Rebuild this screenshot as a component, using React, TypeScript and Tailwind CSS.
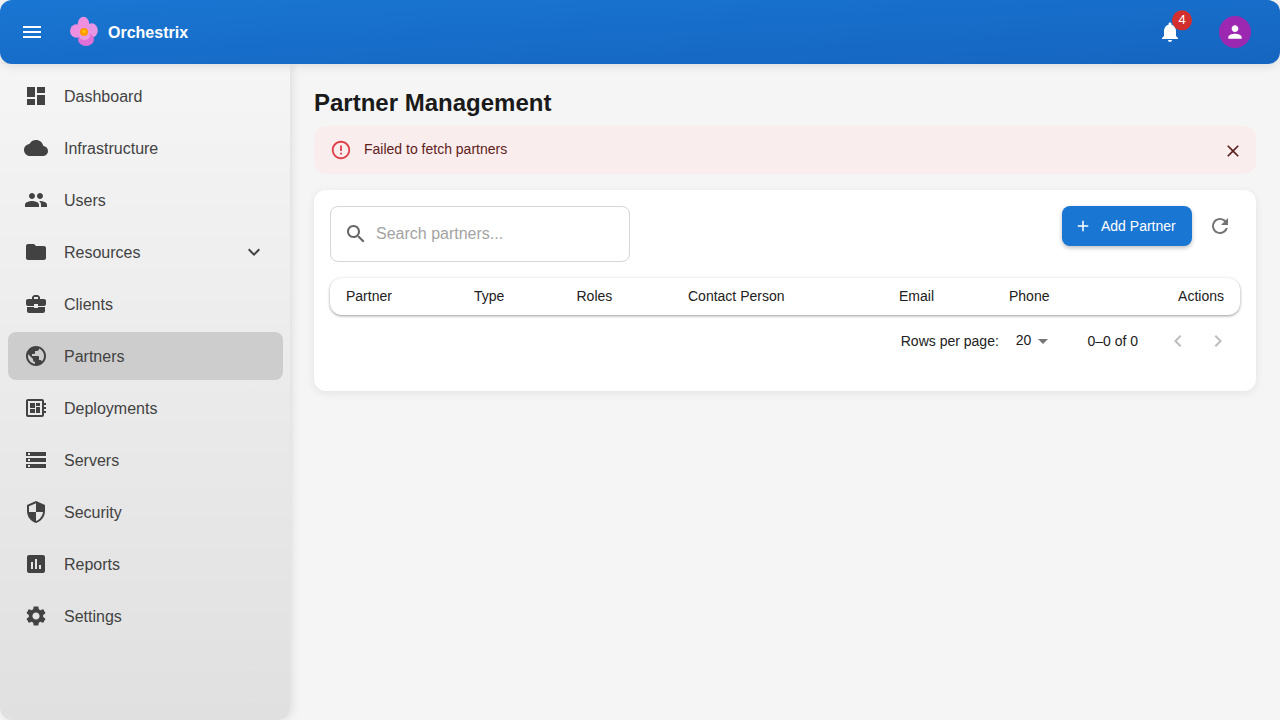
import type { ReactNode } from "react";

const icons = {
  menu: "M3 18h18v-2H3v2zm0-5h18v-2H3v2zm0-7v2h18V6H3z",
  dashboard: "M3 13h8V3H3v10zm0 8h8v-6H3v6zm10 0h8V11h-8v10zm0-18v6h8V3h-8z",
  cloud:
    "M19.35 10.04C18.67 6.59 15.64 4 12 4 9.11 4 6.6 5.64 5.35 8.04 2.34 8.36 0 10.91 0 14c0 3.31 2.69 6 6 6h13c2.76 0 5-2.24 5-5 0-2.64-2.05-4.78-4.65-4.96z",
  people:
    "M16 11c1.66 0 2.99-1.34 2.99-3S17.66 5 16 5c-1.66 0-3 1.34-3 3s1.34 3 3 3zm-8 0c1.66 0 2.99-1.34 2.99-3S9.66 5 8 5C6.34 5 5 6.34 5 8s1.34 3 3 3zm0 2c-2.33 0-7 1.17-7 3.5V19h14v-2.5c0-2.33-4.67-3.5-7-3.5zm8 0c-.29 0-.62.02-.97.05 1.16.84 1.97 1.97 1.97 3.45V19h6v-2.5c0-2.33-4.67-3.5-7-3.5z",
  folder: "M10 4H4c-1.1 0-1.99.9-1.99 2L2 18c0 1.1.9 2 2 2h16c1.1 0 2-.9 2-2V8c0-1.1-.9-2-2-2h-8l-2-2z",
  expand: "M16.59 8.59 12 13.17 7.41 8.59 6 10l6 6 6-6z",
  business:
    "M10 16v-1H3.01L3 19c0 1.11.89 2 2 2h14c1.11 0 2-.89 2-2v-4h-7v1h-4zm10-9h-4.01V5l-2-2h-4l-2 2v2H4c-1.1 0-2 .9-2 2v3c0 1.11.89 2 2 2h6v-2h4v2h6c1.1 0 2-.9 2-2V9c0-1.1-.9-2-2-2zm-6 0h-4V5h4v2z",
  public:
    "M12 2C6.48 2 2 6.48 2 12s4.48 10 10 10 10-4.48 10-10S17.52 2 12 2zm-1 17.93c-3.95-.49-7-3.85-7-7.93 0-.62.08-1.21.21-1.79L9 15v1c0 1.1.9 2 2 2v1.93zm6.9-2.54c-.26-.81-1-1.39-1.9-1.39h-1v-3c0-.55-.45-1-1-1H8v-2h2c.55 0 1-.45 1-1V7h2c1.1 0 2-.9 2-2v-.41c2.93 1.19 5 4.06 5 7.41 0 2.08-.8 3.97-2.1 5.39z",
  board:
    "M22 9V7h-2V5c0-1.1-.9-2-2-2H4c-1.1 0-2 .9-2 2v14c0 1.1.9 2 2 2h14c1.1 0 2-.9 2-2v-2h2v-2h-2v-2h2v-2h-2V9h2zm-4 10H4V5h14v14zM6 13h5v4H6zm6-6h4v3h-4zM6 7h5v5H6zm6 4h4v6h-4z",
  storage: "M2 20h20v-4H2v4zm2-3h2v2H4v-2zM2 4v4h20V4H2zm4 3H4V5h2v2zm-4 7h20v-4H2v4zm2-3h2v2H4v-2z",
  security:
    "M12 1 3 5v6c0 5.55 3.84 10.74 9 12 5.16-1.26 9-6.45 9-12V5l-9-4zm0 10.99h7c-.53 4.12-3.28 7.79-7 8.94V12H5V6.3l7-3.11v8.8z",
  assessment:
    "M19 3H5c-1.1 0-2 .9-2 2v14c0 1.1.9 2 2 2h14c1.1 0 2-.9 2-2V5c0-1.1-.9-2-2-2zM9 17H7v-7h2v7zm4 0h-2V7h2v10zm4 0h-2v-4h2v4z",
  settings:
    "M19.14 12.94c.04-.3.06-.61.06-.94 0-.32-.02-.64-.07-.94l2.03-1.58c.18-.14.23-.41.12-.61l-1.92-3.32c-.12-.22-.37-.29-.59-.22l-2.39.96c-.5-.38-1.03-.7-1.62-.94l-.36-2.54c-.04-.24-.24-.41-.48-.41h-3.84c-.24 0-.43.17-.47.41l-.36 2.54c-.59.24-1.13.57-1.62.94l-2.39-.96c-.22-.08-.47 0-.59.22L2.74 8.87c-.12.21-.08.47.12.61l2.03 1.58c-.05.3-.09.63-.09.94s.02.64.07.94l-2.03 1.58c-.18.14-.23.41-.12.61l1.92 3.32c.12.22.37.29.59.22l2.39-.96c.5.38 1.03.7 1.62.94l.36 2.54c.05.24.24.41.48.41h3.84c.24 0 .44-.17.47-.41l.36-2.54c.59-.24 1.13-.56 1.62-.94l2.39.96c.22.08.47 0 .59-.22l1.92-3.32c.12-.22.07-.47-.12-.61l-2.01-1.58zM12 15.6c-1.98 0-3.6-1.62-3.6-3.6s1.62-3.6 3.6-3.6 3.6 1.62 3.6 3.6-1.62 3.6-3.6 3.6z",
  bell: "M12 22c1.1 0 2-.9 2-2h-4c0 1.1.89 2 2 2zm6-6v-5c0-3.07-1.64-5.64-4.5-6.32V4c0-.83-.67-1.5-1.5-1.5s-1.5.67-1.5 1.5v.68C7.63 5.36 6 7.92 6 11v5l-2 2v1h16v-1l-2-2z",
  person: "M12 12c2.21 0 4-1.79 4-4s-1.79-4-4-4-4 1.79-4 4 1.79 4 4 4zm0 2c-2.67 0-8 1.34-8 4v2h16v-2c0-2.66-5.33-4-8-4z",
  error:
    "M11 15h2v2h-2zm0-8h2v6h-2zm.99-5C6.47 2 2 6.48 2 12s4.47 10 9.99 10C17.52 22 22 17.52 22 12S17.52 2 11.99 2zM12 20c-4.42 0-8-3.58-8-8s3.58-8 8-8 8 3.58 8 8-3.58 8-8 8z",
  close: "M19 6.41 17.59 5 12 10.59 6.41 5 5 6.41 10.59 12 5 17.59 6.41 19 12 13.41 17.59 19 19 17.59 13.41 12z",
  search:
    "M15.5 14h-.79l-.28-.27C15.41 12.59 16 11.11 16 9.5 16 5.91 13.09 3 9.5 3S3 5.91 3 9.5 5.91 16 9.5 16c1.61 0 3.09-.59 4.23-1.57l.27.28v.79l5 4.99L20.49 19l-4.99-5zm-6 0C7.01 14 5 11.99 5 9.5S7.01 5 9.5 5 14 7.01 14 9.5 11.99 14 9.5 14z",
  add: "M19 13h-6v6h-2v-6H5v-2h6V5h2v6h6v2z",
  refresh:
    "M17.65 6.35C16.2 4.9 14.21 4 12 4c-4.42 0-7.99 3.58-7.99 8s3.57 8 7.99 8c3.73 0 6.84-2.55 7.73-6h-2.08c-.82 2.33-3.04 4-5.65 4-3.31 0-6-2.69-6-6s2.69-6 6-6c1.66 0 3.14.69 4.22 1.78L13 11h7V4l-2.35 2.35z",
  dropdown: "M7 10l5 5 5-5z",
  left: "M15.41 16.59 10.83 12l4.58-4.59L14 6l-6 6 6 6 1.41-1.41z",
  right: "M8.59 16.59 13.17 12 8.59 7.41 10 6l6 6-6 6-1.41-1.41z",
};

function Icon({ d, className }: { d: string; className: string }) {
  return (
    <svg viewBox="0 0 24 24" fill="currentColor" className={`shrink-0 ${className}`}>
      <path d={d} />
    </svg>
  );
}

function Logo() {
  return (
    <svg viewBox="0 0 32 32" className="w-8 h-8 shrink-0">
      <ellipse cx="15.5" cy="8" rx="5.8" ry="7.2" fill="#ee8fe0" />
      <ellipse cx="8.5" cy="15" rx="6.5" ry="6.8" fill="#ee8fe0" />
      <ellipse cx="23.8" cy="14.5" rx="6" ry="7.2" fill="#e695e2" />
      <ellipse cx="18" cy="23.5" rx="8" ry="6.4" fill="#e070d8" />
      <ellipse cx="16.5" cy="19.5" rx="5.5" ry="4.5" fill="#e79be2" />
      <circle cx="16" cy="16" r="4" fill="#ff9800" />
      <circle cx="16" cy="15.5" r="1.8" fill="#ffc107" />
    </svg>
  );
}

const navItems: { label: string; icon: string; active?: boolean; expand?: boolean }[] = [
  { label: "Dashboard", icon: icons.dashboard },
  { label: "Infrastructure", icon: icons.cloud },
  { label: "Users", icon: icons.people },
  { label: "Resources", icon: icons.folder, expand: true },
  { label: "Clients", icon: icons.business },
  { label: "Partners", icon: icons.public, active: true },
  { label: "Deployments", icon: icons.board },
  { label: "Servers", icon: icons.storage },
  { label: "Security", icon: icons.security },
  { label: "Reports", icon: icons.assessment },
  { label: "Settings", icon: icons.settings },
];

function HeaderCell({ children, className = "" }: { children: ReactNode; className?: string }) {
  return <div className={`text-sm text-[#212121] ${className}`}>{children}</div>;
}

export default function App() {
  return (
    <div className="w-[1280px] h-[720px] overflow-hidden bg-[#f5f5f5] flex flex-col font-['Liberation_Sans',Arial,sans-serif]">
      {/* Top bar */}
      <header className="relative z-20 h-16 shrink-0 rounded-xl bg-gradient-to-br from-[#1976d2] to-[#1565c0] shadow-[0_2px_10px_rgba(0,0,0,0.1)] text-white flex items-center pl-5 pr-[29px]">
        <Icon d={icons.menu} className="w-6 h-6 mr-6" />
        <Logo />
        <div className="ml-2 font-bold text-base translate-y-px">Orchestrix</div>
        <div className="ml-auto flex items-center gap-[37px]">
          <div className="relative w-6 h-6">
            <Icon d={icons.bell} className="w-6 h-6" />
            <span className="absolute left-[4px] top-[-3px] -translate-y-1/3 translate-x-1/2 w-5 h-5 rounded-full bg-[#d32f2f] text-[13px] flex items-center justify-center">
              4
            </span>
          </div>
          <div className="w-8 h-8 rounded-full bg-[#9c27b0] flex items-center justify-center">
            <Icon d={icons.person} className="w-5 h-5" />
          </div>
        </div>
      </header>

      <div className="flex flex-1 min-h-0">
        {/* Sidebar */}
        <aside className="relative z-10 w-[290px] shrink-0 rounded-b-xl bg-gradient-to-b from-[#f5f5f5] to-[#e0e0e0] shadow-[2px_0_10px_rgba(0,0,0,0.1)] pl-2 pr-[7.5px] pt-[6px]">
          <nav className="flex flex-col">
            {navItems.map((item) => (
              <div
                key={item.label}
                className={`h-12 my-[2px] rounded-lg flex items-center pl-4 pr-[16.5px] text-[#424242] ${
                  item.active ? "bg-[#cdcdcd]" : ""
                }`}
              >
                <Icon d={item.icon} className="w-6 h-6" />
                <span className="ml-4 text-base translate-y-px">{item.label}</span>
                {item.expand && <Icon d={icons.expand} className="w-6 h-6 ml-auto" />}
              </div>
            ))}
          </nav>
        </aside>

        {/* Main */}
        <main className="flex-1 min-w-0 pl-6 pr-6 pt-6">
          <h1 className="text-2xl font-bold text-[#1a1a1a] leading-[30.4px] mb-2">Partner Management</h1>

          <div className="h-12 rounded-xl bg-[#f9eded] flex items-center pl-4 pr-[13px] mb-4 text-[#5f2120]">
            <Icon d={icons.error} className="w-[22px] h-[22px] text-[#e04048] mr-3" />
            <span className="text-sm -translate-y-px">Failed to fetch partners</span>
            <Icon d={icons.close} className="w-5 h-5 ml-auto translate-y-px" />
          </div>

          <section className="h-[201px] rounded-xl bg-white shadow-[0_2px_8px_rgba(0,0,0,0.08)] p-4">
            <div className="flex items-start justify-between">
              <div className="w-[300px] h-14 rounded-lg border border-[#d6d6d6] flex items-center pl-[13px] text-[#a3a3a3]">
                <Icon d={icons.search} className="w-6 h-6 text-[#666666] mr-[8px]" />
                <span className="text-base">Search partners...</span>
              </div>
              <div className="flex items-center">
                <div className="w-[130px] h-10 rounded-lg bg-[#1976d2] text-white shadow-[0_2px_4px_rgba(0,0,0,0.25)] flex items-center pl-[12px]">
                  <Icon d={icons.add} className="w-[18px] h-[18px] mr-[9px]" />
                  <span className="text-sm">Add Partner</span>
                </div>
                <div className="w-10 h-10 ml-2 flex items-center justify-center text-[#757575]">
                  <Icon d={icons.refresh} className="w-6 h-6" />
                </div>
              </div>
            </div>

            <div className="mt-4 h-[36.6px] rounded-xl bg-white shadow-[0_1px_3px_rgba(0,0,0,0.4)] grid grid-cols-[128px_102.5px_111.5px_211px_110px_1fr_auto] items-center px-4 pb-px">
              <HeaderCell>Partner</HeaderCell>
              <HeaderCell>Type</HeaderCell>
              <HeaderCell>Roles</HeaderCell>
              <HeaderCell>Contact Person</HeaderCell>
              <HeaderCell>Email</HeaderCell>
              <HeaderCell>Phone</HeaderCell>
              <HeaderCell>Actions</HeaderCell>
            </div>

            <div className="h-[52px] flex items-center justify-end text-sm text-[#212121] pr-[10px]">
              <span>Rows per page:</span>
              <span className="ml-[17px] -translate-y-px">20</span>
              <Icon d={icons.dropdown} className="w-6 h-6 text-[#757575]" />
              <span className="ml-[32px]">0–0 of 0</span>
              <Icon d={icons.left} className="w-6 h-6 ml-7 text-[#bdbdbd]" />
              <Icon d={icons.right} className="w-6 h-6 ml-4 text-[#bdbdbd]" />
            </div>
          </section>
        </main>
      </div>
    </div>
  );
}
